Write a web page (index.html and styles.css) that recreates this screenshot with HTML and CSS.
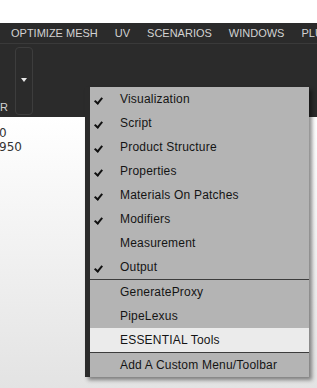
FILE: index.html
```html
<!DOCTYPE html>
<html lang="en">
<head>
  <meta charset="UTF-8">
  <title>Windows menu</title>
  <link rel="stylesheet" href="styles.css">
</head>
<body>
  <div class="top-strip"></div>
  <div class="menubar">
    <span class="menu-item">OPTIMIZE MESH</span>
    <span class="menu-item">UV</span>
    <span class="menu-item">SCENARIOS</span>
    <span class="menu-item">WINDOWS</span>
    <span class="menu-item">PLUGINS</span>
  </div>
  <div class="toolbar">
    <span class="tool-label">R</span>
    <div class="drop-button"><span class="caret"></span></div>
  </div>
  <div class="viewport">
    <div class="stats">
      <div>0</div>
      <div>950</div>
    </div>
  </div>

  <div class="popup">
    <ul class="popup-list">
      <li class="checked">Visualization</li>
      <li class="checked">Script</li>
      <li class="checked">Product Structure</li>
      <li class="checked">Properties</li>
      <li class="checked">Materials On Patches</li>
      <li class="checked">Modifiers</li>
      <li>Measurement</li>
      <li class="checked">Output</li>
      <li class="sep"></li>
      <li>GenerateProxy</li>
      <li>PipeLexus</li>
      <li class="active">ESSENTIAL Tools</li>
      <li class="sep"></li>
      <li>Add A Custom Menu/Toolbar</li>
    </ul>
  </div>
</body>
</html>
```

FILE: styles.css
```css
* {
  box-sizing: border-box;
}
body {
  margin: 0;
  width: 317px;
  height: 388px;
  overflow: hidden;
  display: flex;
  flex-direction: column;
  position: relative;
  font-family: "Liberation Sans", Arial, sans-serif;
  background: #fff;
}
.top-strip {
  height: 23px;
  background: #fff;
}
.menubar {
  height: 21px;
  background: #2b2b2b;
  border-bottom: 1px solid #3a3a3a;
  display: flex;
  align-items: center;
  gap: 17px;
  padding-left: 11px;
  white-space: nowrap;
  overflow: hidden;
}
.menu-item {
  color: #d2d2d2;
  font-size: 11px;
  line-height: 20px;
  flex-shrink: 0;
}
.toolbar {
  height: 73px;
  background: #2b2b2b;
  position: relative;
  display: flex;
  align-items: flex-start;
}
.tool-label {
  position: absolute;
  left: 0;
  bottom: 4px;
  color: #d2d2d2;
  font-size: 11px;
}
.drop-button {
  margin: 3px 0 0 15px;
  width: 18px;
  height: 68px;
  border: 1px solid #3d3d3d;
  border-radius: 4px;
  display: flex;
  justify-content: center;
  padding-top: 30px;
}
.caret {
  width: 0;
  height: 0;
  border-left: 3px solid transparent;
  border-right: 3px solid transparent;
  border-top: 4px solid #e8e8e8;
}
.viewport {
  flex: 1;
  background: linear-gradient(to bottom, #ffffff, #e3e3e3);
}
.stats {
  padding-top: 9px;
  font-family: "DejaVu Sans", sans-serif;
  font-size: 12px;
  line-height: 14px;
  color: #333;
  margin-left: -1px;
}
.popup {
  position: absolute;
  left: 85px;
  top: 87px;
  width: 224px;
  height: 290px;
  background: #b4b4b4;
  border-left: 5px solid #2b2b2b;
  box-shadow: 3px 3px 4px rgba(0, 0, 0, 0.45);
}
.popup-list {
  list-style: none;
  margin: 0;
  padding: 0;
}
.popup-list li {
  height: 24px;
  line-height: 25px;
  padding-left: 30px;
  font-size: 12px;
  letter-spacing: 0.2px;
  color: #141414;
  position: relative;
  white-space: nowrap;
}
.popup-list li.checked::before {
  content: '';
  position: absolute;
  left: 6px;
  top: 9px;
  width: 3px;
  height: 6px;
  border-right: 2px solid #111;
  border-bottom: 2px solid #111;
  transform: rotate(40deg);
}
.popup-list li.sep {
  height: 1px;
  background: #3c3c3c;
}
.popup-list li.active {
  background: #ebebeb;
}
```
